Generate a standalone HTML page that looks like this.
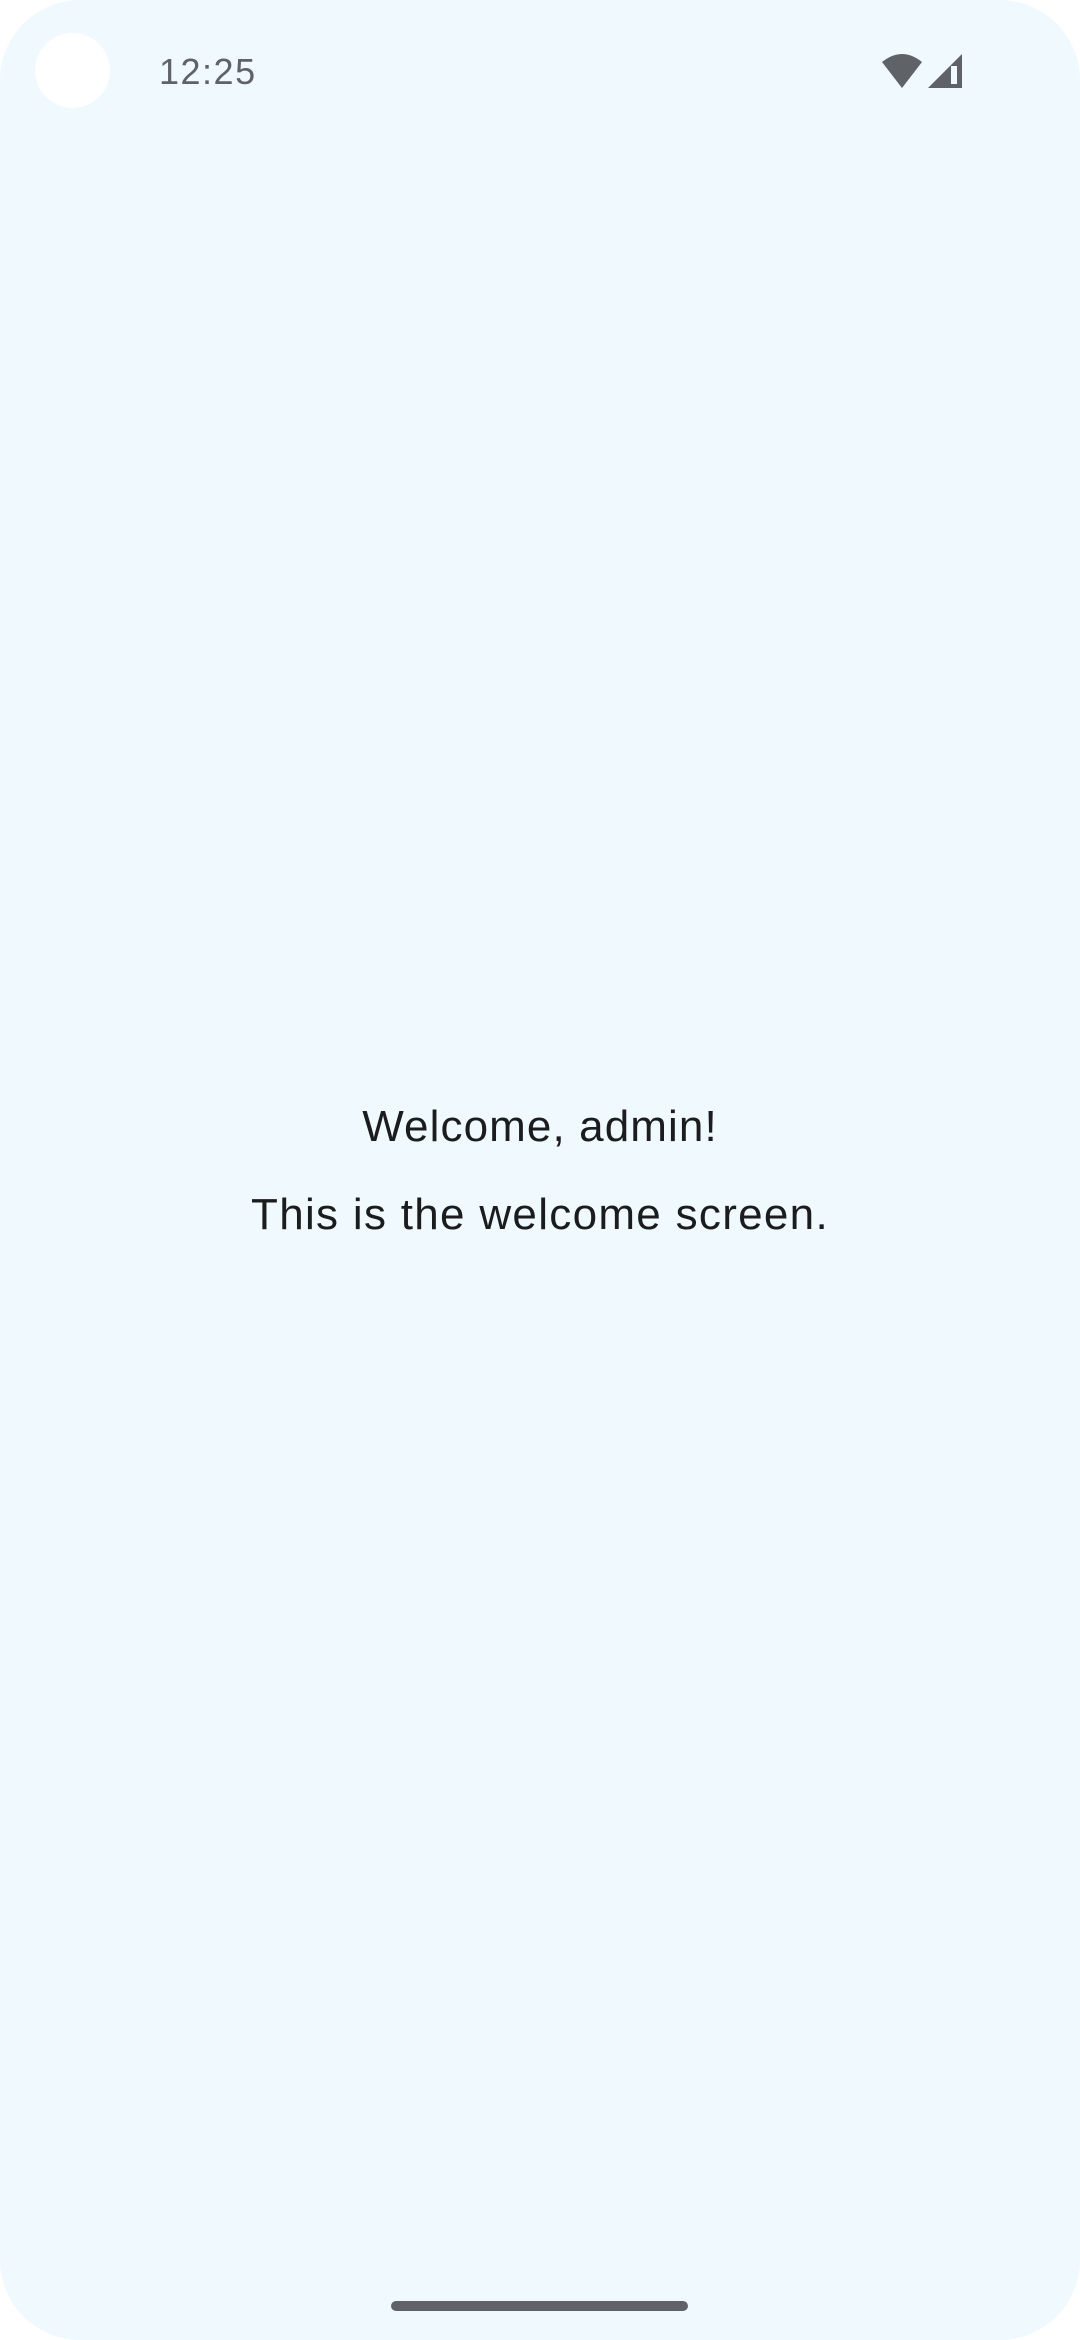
<!DOCTYPE html>
<html><head><meta charset="utf-8"><style>
html,body{margin:0;padding:0;background:#fff;}
.s{position:relative;width:1080px;height:2340px;background:#f0f9fe;border-radius:80px;overflow:hidden;font-family:"Liberation Sans",sans-serif;}
.cam{position:absolute;left:35px;top:33px;width:75px;height:75px;border-radius:50%;background:#fff;}
.time{position:absolute;left:159px;top:51px;font-size:36px;color:#5f6368;letter-spacing:1.5px;}
.t{position:absolute;left:0;width:1080px;text-align:center;color:#1b1c1e;font-size:44px;letter-spacing:1.3px;}
.nav{position:absolute;left:391px;top:2301px;width:297px;height:10px;border-radius:5px;background:#5f6368;}
</style></head><body><div class="s">
<div class="cam"></div>
<div class="time">12:25</div>
<svg style="position:absolute;left:880px;top:52px" width="86" height="38" viewBox="0 0 86 38">
<path d="M2 10 Q22 -6 42 10 L22 36 Z" fill="#5f6368"/>
<path d="M48 36 L82 2 L82 36 Z" fill="#5f6368"/>
<rect x="71" y="14" width="6" height="18" fill="#f0f9fe"/>
</svg>
<div class="t" style="top:1102px;letter-spacing:1.1px">Welcome, admin!</div>
<div class="t" style="top:1190px">This is the welcome screen.</div>
<div class="nav"></div>
</div></body></html>
